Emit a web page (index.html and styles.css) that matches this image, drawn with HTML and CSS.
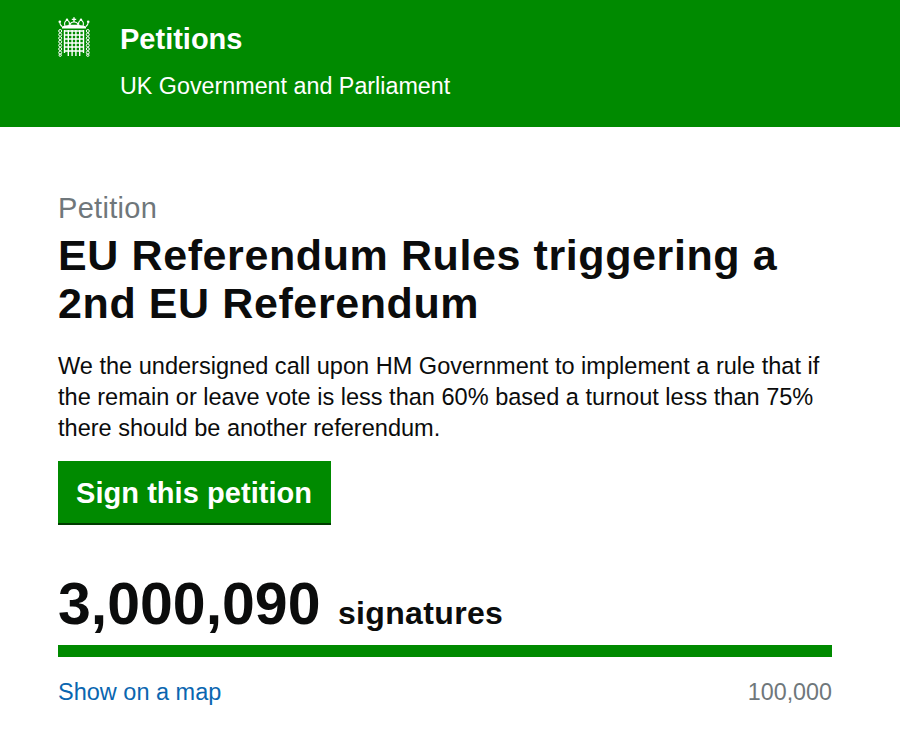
FILE: index.html
```html
<!DOCTYPE html>
<html lang="en">
<head>
<meta charset="utf-8">
<title>Petitions</title>
<link rel="stylesheet" href="styles.css">
</head>
<body>
<header class="site-header">
  <svg class="crest" viewBox="0 0 32 40" aria-hidden="true">
    <g fill="#fff">
      <path d="M4 9.500 C9 7 23 7 28 9.500 V11.500 H4 Z"/>
      <circle cx="1.800" cy="4.800" r="1.300"/>
      <circle cx="30.200" cy="4.800" r="1.300"/>
      <circle cx="9" cy="2.800" r="1.200"/>
      <circle cx="23" cy="2.800" r="1.200"/>
      <path d="M15.300 .2h1.400v1.500h1.500v1.400h-1.500v2h-1.400v-2h-1.500v-1.400h1.500z"/>
    </g>
    <g fill="none" stroke="#fff" stroke-width="1.100">
      <path d="M4 9.500 C2.500 8 1.800 7 1.800 5.500 M28 9.500 C29.500 8 30.200 7 30.200 5.500"/>
      <path d="M7 9 C6 6 7 4 9 3 C11 4 12 6 11 8.500 M25 9 C26 6 25 4 23 3 C21 4 20 6 21 8.500"/>
      <path d="M12 8.500 C12 6 13.500 5 16 5 C18.500 5 20 6 20 8.500"/>
    </g>
    <g fill="none" stroke="#fff" stroke-width="1">
      <circle cx="2.200" cy="14" r="1.500"/>
      <circle cx="2.200" cy="17.600" r="1.500"/>
      <circle cx="2.200" cy="21.200" r="1.500"/>
      <circle cx="2.200" cy="24.800" r="1.500"/>
      <circle cx="2.200" cy="28.400" r="1.500"/>
      <circle cx="2.200" cy="32" r="1.500"/>
      <circle cx="2.200" cy="35.600" r="1.500"/>
      <circle cx="2.200" cy="38.200" r="1.200"/>
      <circle cx="29.800" cy="14" r="1.500"/>
      <circle cx="29.800" cy="17.600" r="1.500"/>
      <circle cx="29.800" cy="21.200" r="1.500"/>
      <circle cx="29.800" cy="24.800" r="1.500"/>
      <circle cx="29.800" cy="28.400" r="1.500"/>
      <circle cx="29.800" cy="32" r="1.500"/>
      <circle cx="29.800" cy="35.600" r="1.500"/>
      <circle cx="29.800" cy="38.200" r="1.200"/>
    </g>
    <g fill="none" stroke="#fff" stroke-width="1.400">
      <path d="M6.500 13v23M10.300 13v26M14.100 13v26M17.900 13v26M21.700 13v26M25.500 13v23"/>
      <path d="M6 14h20M6 18h20M6 22h20M6 26h20M6 30h20M6 34h20"/>
    </g>
  </svg>
  <div class="brand">
    <div class="brand-name">Petitions</div>
    <div class="brand-sub">UK Government and Parliament</div>
  </div>
</header>
<main class="content">
  <div class="eyebrow">Petition</div>
  <h1 class="title">EU Referendum Rules triggering a 2nd EU Referendum</h1>
  <p class="summary">We the undersigned call upon HM Government to implement a rule that if the remain or leave vote is less than 60% based a turnout less than 75% there should be another referendum.</p>
  <a class="sign-button" href="#">Sign this petition</a>
  <div class="count"><span class="count-number">3,000,090</span> <span class="count-label">signatures</span></div>
  <div class="progress"></div>
  <div class="meta">
    <a class="map-link" href="#">Show on a map</a>
    <span class="threshold">100,000</span>
  </div>
</main>
</body>
</html>
```

FILE: styles.css
```css
* { box-sizing: border-box; }
html, body { margin: 0; padding: 0; }
body {
  background: #fff;
  color: #0b0c0c;
  font-family: "Liberation Sans", Arial, sans-serif;
  height: 739px;
  overflow: hidden;
}
.site-header {
  background: #008a00;
  color: #fff;
  height: 127px;
  display: flex;
  gap: 30px;
  padding: 17px 0 0 58px;
}
.crest { width: 32px; height: 40px; flex: none; }
.brand-name { font-size: 29px; font-weight: 700; line-height: 42px; margin-top: 1px; }
.brand-sub { font-size: 23.300px; line-height: 26px; margin-top: 13px; }
.content { padding: 64px 68px 0 58px; }
.eyebrow { font-size: 29px; letter-spacing: .3px; line-height: 34px; color: #6f777b; }
.title { margin: 6px 0 0; font-size: 43px; letter-spacing: .6px; line-height: 48px; font-weight: 700; max-width: 730px; }
.summary { margin: 24px 0 0; font-size: 23.560px; line-height: 31px; }
.sign-button {
  display: inline-block;
  margin-top: 17px;
  background: #008a00;
  border-bottom: 2px solid #003c00;
  color: #fff;
  font-size: 29px;
  font-weight: 700;
  letter-spacing: .05px;
  line-height: 64px;
  height: 64px;
  padding: 0 19px 0 18px;
  text-decoration: none;
}
.count { margin-top: 48px; line-height: 62px; white-space: nowrap; }
.count-number { font-size: 59px; font-weight: 700; }
.count-label { font-size: 32px; font-weight: 700; letter-spacing: .35px; margin-left: 13px; }
.progress { height: 12px; background: #008a00; margin-top: -5px; }
.meta { display: flex; justify-content: space-between; margin-top: 20px; font-size: 23.500px; line-height: 30px; }
.map-link { color: #0a66b0; text-decoration: none; }
.threshold { color: #6f777b; font-size: 23.300px; }
```
